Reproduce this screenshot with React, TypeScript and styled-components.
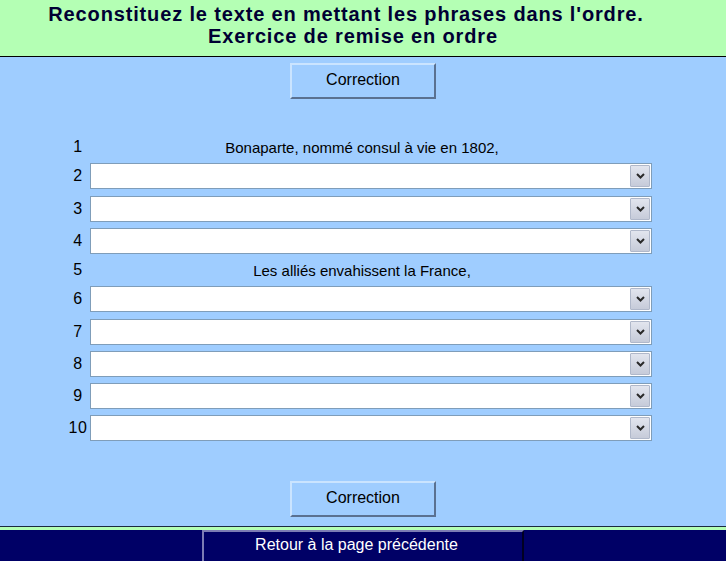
import styled, { createGlobalStyle } from 'styled-components';

const GlobalStyle = createGlobalStyle`
  html, body {
    margin: 0;
    padding: 0;
    background-color: #9fcdff;
    font-family: "Liberation Sans", Arial, sans-serif;
  }
`;

const Page = styled.div`
  width: 726px;
  min-height: 561px;
  display: flex;
  flex-direction: column;
  overflow: hidden;
`;

const Header = styled.header`
  height: 57px;
  box-sizing: border-box;
  background-color: #b4ffb4;
  border-bottom: 1px solid #000;
  display: flex;
  flex-direction: column;
  align-items: center;
  padding-top: 3px;
`;

const Title = styled.h1`
  margin: 0;
  font-size: 20px;
  line-height: 22px;
  font-weight: bold;
  letter-spacing: 0.85px;
  color: #000033;
  text-align: center;
`;

const TitleLine = styled.span<{ $shift: number }>`
  display: block;
  padding-right: ${({ $shift }) => $shift}px;
`;

const Main = styled.main`
  flex: 1;
  display: flex;
  flex-direction: column;
  align-items: center;
`;

const CorrectionButton = styled.button<{ $top: number }>`
  margin-top: ${({ $top }) => $top}px;
  width: 146px;
  height: 36px;
  background-color: #9fcdff;
  border: 2px solid;
  border-color: #cae4ff #5a7191 #5a7191 #cae4ff;
  font-family: "Liberation Sans", Arial, sans-serif;
  font-size: 16px;
  color: #000;
  padding: 0 0 2px;
  cursor: pointer;
`;

const Grid = styled.div`
  align-self: flex-start;
  margin-left: 66px;
  margin-top: 38px;
  width: 586px;
  display: grid;
  grid-template-columns: 24px 562px;
  row-gap: 6.25px;
`;

const Num = styled.div<{ $tall: boolean }>`
  height: ${({ $tall }) => ($tall ? 26 : 20)}px;
  display: flex;
  align-items: center;
  justify-content: center;
  font-size: 16px;
  letter-spacing: 0.5px;
  color: #000;
`;

const Given = styled.div`
  height: 20px;
  display: flex;
  align-items: center;
  justify-content: center;
  padding-right: 18px;
  font-size: 15px;
  color: #000;
`;

const SelectBox = styled.div`
  height: 26px;
  box-sizing: border-box;
  display: flex;
  align-items: stretch;
  background: #fff;
  border: 1px solid #7f9db9;
  padding: 1px;
`;

const NativeSelect = styled.select`
  flex: 1;
  appearance: none;
  border: none;
  background: transparent;
  outline: none;
  font-family: "Liberation Sans", Arial, sans-serif;
  font-size: 16px;
`;

const ArrowButton = styled.div`
  width: 20px;
  box-sizing: border-box;
  display: flex;
  align-items: center;
  justify-content: center;
  border: 1px solid #b0b8ca;
  border-radius: 1px;
  background: linear-gradient(#e2e5ee, #c6cbd9);
`;

const Footer = styled.footer`
  margin-top: 9px;
  border-top: 1px solid #1a2a40;
  padding-top: 3px;
  background: linear-gradient(#b4ffb4 0 3px, #000066 3px);
  display: flex;
  justify-content: center;
`;

const BackButton = styled.button`
  width: 322px;
  height: 34px;
  margin-left: -1px;
  background-color: #000066;
  border: 2px solid;
  border-color: #7c7cb4 #000022 #000022 #7c7cb4;
  color: #fff;
  font-family: "Liberation Sans", Arial, sans-serif;
  font-size: 16px;
  padding: 0 12px 4px 0;
  cursor: pointer;
`;

type Row = { n: number; text?: string };

const rows: Row[] = [
  { n: 1, text: 'Bonaparte, nommé consul à vie en 1802,' },
  { n: 2 },
  { n: 3 },
  { n: 4 },
  { n: 5, text: 'Les alliés envahissent la France,' },
  { n: 6 },
  { n: 7 },
  { n: 8 },
  { n: 9 },
  { n: 10 },
];

function Chevron()
{
  return (
    <svg width="9" height="6" viewBox="0 0 9 6">
      <path d="M1 1 L4.5 4.5 L8 1" fill="none" stroke="#2a2a2a" strokeWidth="2" />
    </svg>
  );
}

export default function App()
{
  return (
    <Page>
      <GlobalStyle />
      <Header>
        <Title>
          <TitleLine $shift={34}>Reconstituez le texte en mettant les phrases dans l'ordre.</TitleLine>
          <TitleLine $shift={20}>Exercice de remise en ordre</TitleLine>
        </Title>
      </Header>
      <Main>
        <CorrectionButton $top={6}>Correction</CorrectionButton>
        <Grid>
          {rows.map((row) => [
            <Num key={`n${row.n}`} $tall={!row.text}>{row.n}</Num>,
            row.text ? (
              <Given key={`t${row.n}`}>{row.text}</Given>
            ) : (
              <SelectBox key={`s${row.n}`}>
                <NativeSelect />
                <ArrowButton>
                  <Chevron />
                </ArrowButton>
              </SelectBox>
            ),
          ])}
        </Grid>
        <CorrectionButton $top={40}>Correction</CorrectionButton>
      </Main>
      <Footer>
        <BackButton>Retour à la page précédente</BackButton>
      </Footer>
    </Page>
  );
}
